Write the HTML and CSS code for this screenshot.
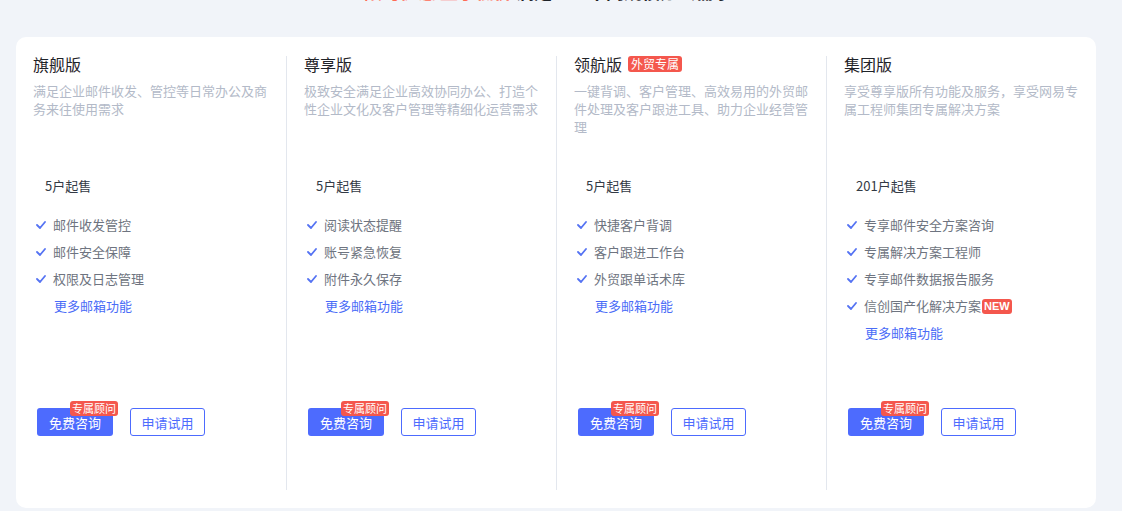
FILE: index.html
```html
<!DOCTYPE html>
<html lang="zh-CN">
<head>
<meta charset="utf-8">
<title>版本对比</title>
<link rel="stylesheet" href="styles.css">
</head>
<body>
<div class="page">
  <div class="headline"><span class="hl-red">限时优惠 立享低价</span> <span class="hl-dark">满足企业不同规模办公需求</span></div>
  <div class="card">
    <div class="col">
      <div class="title">旗舰版</div>
      <div class="desc">满足企业邮件收发、管控等日常办公及商务来往使用需求</div>
      <div class="price">5户起售</div>
      <ul class="features">
        <li><svg class="check" viewBox="0 0 10 8"><polyline points="1,4 4,7 9,1"/></svg>邮件收发管控</li>
        <li><svg class="check" viewBox="0 0 10 8"><polyline points="1,4 4,7 9,1"/></svg>邮件安全保障</li>
        <li><svg class="check" viewBox="0 0 10 8"><polyline points="1,4 4,7 9,1"/></svg>权限及日志管理</li>
        <li class="more">更多邮箱功能</li>
      </ul>
      <div class="actions">
        <a class="btn btn-primary">免费咨询<span class="tip">专属顾问</span></a>
        <a class="btn btn-outline">申请试用</a>
      </div>
    </div>
    <div class="col">
      <div class="title">尊享版</div>
      <div class="desc">极致安全满足企业高效协同办公、打造个性企业文化及客户管理等精细化运营需求</div>
      <div class="price">5户起售</div>
      <ul class="features">
        <li><svg class="check" viewBox="0 0 10 8"><polyline points="1,4 4,7 9,1"/></svg>阅读状态提醒</li>
        <li><svg class="check" viewBox="0 0 10 8"><polyline points="1,4 4,7 9,1"/></svg>账号紧急恢复</li>
        <li><svg class="check" viewBox="0 0 10 8"><polyline points="1,4 4,7 9,1"/></svg>附件永久保存</li>
        <li class="more">更多邮箱功能</li>
      </ul>
      <div class="actions">
        <a class="btn btn-primary">免费咨询<span class="tip">专属顾问</span></a>
        <a class="btn btn-outline">申请试用</a>
      </div>
    </div>
    <div class="col">
      <div class="title">领航版<span class="tag">外贸专属</span></div>
      <div class="desc">一键背调、客户管理、高效易用的外贸邮件处理及客户跟进工具、助力企业经营管理</div>
      <div class="price">5户起售</div>
      <ul class="features">
        <li><svg class="check" viewBox="0 0 10 8"><polyline points="1,4 4,7 9,1"/></svg>快捷客户背调</li>
        <li><svg class="check" viewBox="0 0 10 8"><polyline points="1,4 4,7 9,1"/></svg>客户跟进工作台</li>
        <li><svg class="check" viewBox="0 0 10 8"><polyline points="1,4 4,7 9,1"/></svg>外贸跟单话术库</li>
        <li class="more">更多邮箱功能</li>
      </ul>
      <div class="actions">
        <a class="btn btn-primary">免费咨询<span class="tip">专属顾问</span></a>
        <a class="btn btn-outline">申请试用</a>
      </div>
    </div>
    <div class="col">
      <div class="title">集团版</div>
      <div class="desc">享受尊享版所有功能及服务，享受网易专属工程师集团专属解决方案</div>
      <div class="price">201户起售</div>
      <ul class="features">
        <li><svg class="check" viewBox="0 0 10 8"><polyline points="1,4 4,7 9,1"/></svg>专享邮件安全方案咨询</li>
        <li><svg class="check" viewBox="0 0 10 8"><polyline points="1,4 4,7 9,1"/></svg>专属解决方案工程师</li>
        <li><svg class="check" viewBox="0 0 10 8"><polyline points="1,4 4,7 9,1"/></svg>专享邮件数据报告服务</li>
        <li><svg class="check" viewBox="0 0 10 8"><polyline points="1,4 4,7 9,1"/></svg>信创国产化解决方案<span class="new">NEW</span></li>
        <li class="more">更多邮箱功能</li>
      </ul>
      <div class="actions">
        <a class="btn btn-primary">免费咨询<span class="tip">专属顾问</span></a>
        <a class="btn btn-outline">申请试用</a>
      </div>
    </div>
  </div>
</div>
</body>
</html>
```

FILE: styles.css
```css
* { box-sizing: border-box; }
html, body { margin: 0; padding: 0; }
body {
  background: #f1f4f9;
  font-family: "Noto Sans CJK SC", "Noto Sans", sans-serif;
  overflow: hidden;
}
.page { padding: 0 26px 0 16px; }
.headline {
  margin-top: -21px;
  height: 24px;
  line-height: 24px;
  font-size: 18px;
  font-weight: 700;
  text-align: center;
  margin-bottom: 34px;
  padding-right: 16px;
  white-space: nowrap;
}
.hl-red { color: #ff6a55; }
.hl-dark { color: #1f2329; }
.card {
  background: #fff;
  border-radius: 10px;
  height: 471px;
  padding: 19px 0 18px;
  display: grid;
  grid-template-columns: repeat(4, 1fr);
}
.col {
  display: flex;
  flex-direction: column;
  padding: 0 17px 54px;
}
.col + .col { border-left: 1px solid #e3e7ee; }
.title {
  font-size: 16px;
  line-height: 16px;
  color: #1f2329;
  display: flex;
  align-items: center;
}
.tag {
  margin-left: 6px;
  background: #f4574d;
  color: #fff;
  font-size: 12px;
  line-height: 16px;
  padding: 0 3px;
  border-radius: 3px;
}
.desc {
  margin-top: 10px;
  height: 72px;
  font-size: 13px;
  line-height: 18px;
  color: #b3bac8;
}
.price {
  margin-top: 23px;
  padding-left: 12px;
  font-size: 13px;
  line-height: 18px;
  color: #333a45;
}
.features {
  list-style: none;
  margin: 21px 0 0;
  padding: 0;
}
.features li {
  display: flex;
  align-items: center;
  font-size: 13px;
  line-height: 18px;
  color: #6e7480;
  margin-bottom: 9px;
  padding-left: 3px;
}
.features li.more {
  padding-left: 21px;
  color: #4a6cf7;
}
.check {
  width: 10px;
  height: 8px;
  margin-right: 7px;
  fill: none;
  stroke: #5573f3;
  stroke-width: 1.8;
  stroke-linecap: round;
  stroke-linejoin: round;
}
.new {
  margin-left: 1px;
  background: #f4574d;
  color: #fff;
  font-size: 11px;
  font-weight: 700;
  line-height: 15px;
  padding: 0 2px;
  border-radius: 3px;
  font-family: "Liberation Sans", sans-serif;
}
.actions {
  margin-top: auto;
  display: flex;
  gap: 17px;
  padding-left: 4px;
}
.btn {
  position: relative;
  height: 28px;
  width: 76px;
  display: inline-flex;
  align-items: center;
  justify-content: center;
  font-size: 13px;
  border-radius: 3px;
  cursor: pointer;
}
.btn-primary {
  background: #4d6bfe;
  color: #fff;
}
.btn-outline {
  width: 75px;
  border: 1px solid #4d6bfe;
  color: #4d6bfe;
  background: #fff;
}
.tip {
  position: absolute;
  top: -7px;
  right: -5px;
  background: #f4574d;
  color: #fff;
  font-size: 11px;
  line-height: 15px;
  padding: 0 2px;
  border-radius: 3px;
  white-space: nowrap;
}
```
